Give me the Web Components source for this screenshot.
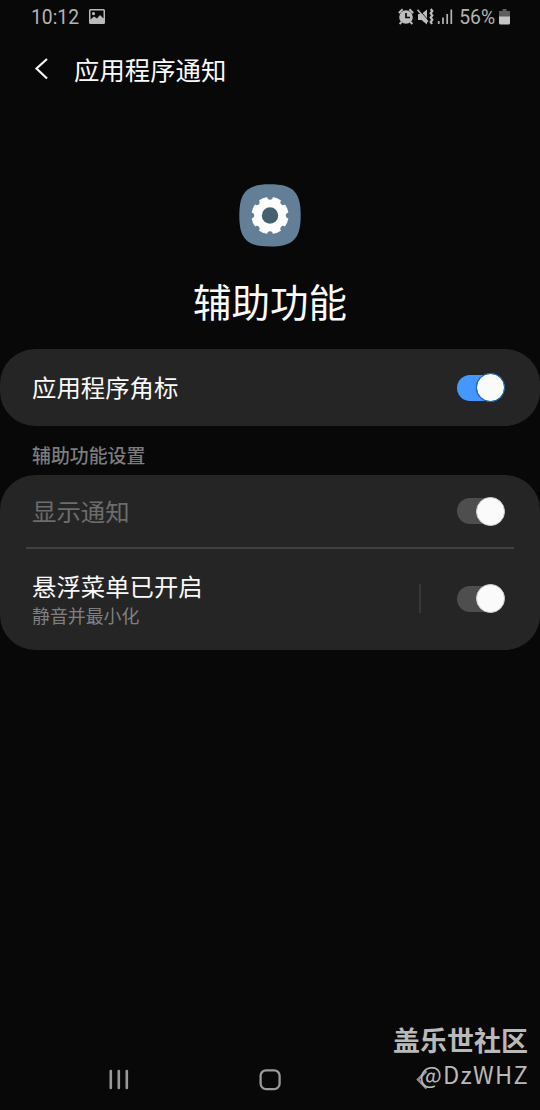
<!DOCTYPE html>
<html lang="zh-CN">
<head>
<meta charset="utf-8">
<title>应用程序通知</title>
<style>
html,body{margin:0;background:#080808}
body{font-family:Roboto,"Noto Sans CJK SC",sans-serif;color:#fafafa}
</style>
</head>
<body>
<notification-screen></notification-screen>
<script>
function define(name, html, setup) {
  const template = document.createElement('template');
  template.innerHTML = html;
  customElements.define(name, class extends HTMLElement {
    constructor() {
      super();
      this.attachShadow({mode: 'open'}).append(template.content.cloneNode(true));
      if (setup) setup(this);
    }
  });
}

define('status-bar', `
<style>
:host{display:flex;height:34px;padding:0 29px 0 31px;box-sizing:border-box;align-items:center;color:#b4b4b4;font-size:19.300px;line-height:32px}
span{padding-top:2px}
svg{display:block;flex:none}
.photo{margin-left:10px;margin-right:auto}
.pct{margin:0 4px 0 6px;font-size:19.300px}
</style>
<span>10:12</span>
<svg class="photo" width="16" height="16" viewBox="0 0 16 16"><path fill="#bababa" fill-rule="evenodd" d="M1.500 0h13Q16 0 16 1.500v12q0 1.500-1.500 1.500h-13Q0 15 0 13.500v-12Q0 0 1.500 0ZM1.500 1.500v9L5 7.600l3 2L11 6l3.500 3.500v-8ZM4.500 3a1.600 1.600 0 1 1 0 3.200a1.600 1.600 0 0 1 0-3.200Z"/></svg>
<svg width="55" height="18" viewBox="0 0 55 18">
 <circle cx="8" cy="9" r="6.800" fill="#bdbdbd"/>
 <path d="M.8 5 4.600 1.300M11.400 1.300 15.200 5M3.600 14 1.600 16M12.400 14l2 2" stroke="#bdbdbd" stroke-width="1.900"/>
 <path d="M8 5v4.500h4" fill="none" stroke="#080808" stroke-width="1.700"/>
 <path d="M20 6h3.500l5.500-4.500v15l-5.500-4.500H20Z" fill="#bdbdbd"/>
 <path d="M20.700 1.300 30.500 12.500" stroke="#080808" stroke-width="1"/>
 <path d="m19.500 1.800 10.500 12" stroke="#bdbdbd" stroke-width="1.500"/>
 <path d="m32.700 1 1.600 2-1.600 2.200 1.600 2.200-1.600 2.200 1.600 2.200-1.600 2.200 1.300 2" fill="none" stroke="#bdbdbd" stroke-width="2.200"/>
 <path d="M40.700 13v3M45 9.500V16M49.200 6v10M53.300 1.500V16" stroke="#b4b4b4" stroke-width="1.700"/>
</svg>
<span class="pct">56%</span>
<svg width="12" height="16" viewBox="0 0 12 16"><path d="M3.500 0h4v2H11v6H0V2h3.500Z" fill="#5d5d5d"/><path d="M0 7.500h11V14q0 1.500-1.500 1.500h-8Q0 15.500 0 14Z" fill="#c4c4c4"/></svg>`);

define('title-bar', `
<style>
:host{display:flex;height:70px;padding-left:34px;align-items:center}
svg{display:block;margin-right:25px}
h1{margin:0;padding-top:3px;font-size:25.400px;line-height:36px;font-weight:400}
</style>
<svg width="15" height="24" viewBox="0 0 15 24"><path d="M13 2 2.500 11.500 13 21.500" fill="none" stroke="#f5f5f5" stroke-width="2.200"/></svg>
<h1><slot></slot></h1>`);

define('app-hero', `
<style>
:host{display:flex;flex-direction:column;align-items:center;height:245px;padding-top:80px;box-sizing:border-box}
svg{display:block}
h2{margin:29px 0 0;font-size:38.500px;line-height:56px;font-weight:400}
</style>
<svg width="62" height="63" viewBox="0 0 62 63">
 <path d="M31 .3C54 .3 61.700 8 61.700 31.500S54 62.500 31 62.500.300 55 .300 31.500 8 .300 31 .300Z" fill="#627f97"/>
 <circle cx="31" cy="31.500" r="18.600" fill="#fff"/>
 <g class="notches" fill="#627f97"></g>
 <circle cx="31" cy="31.500" r="8.200" fill="#45616d"/>
</svg>
<h2><slot></slot></h2>`, host => {
  const group = host.shadowRoot.querySelector('.notches');
  for (let i = 0; i < 8; i++) {
    const notch = document.createElementNS('http://www.w3.org/2000/svg', 'path');
    notch.setAttribute('d', 'M27.900 12.300 28.600 14.400Q29.300 15.700 31 15.700T33.400 14.400L34.100 12.300Z');
    notch.setAttribute('transform', `rotate(${i * 45} 31 31.5)`);
    group.append(notch);
  }
});

define('settings-card', `
<style>:host{display:block;background:#252525;border-radius:35px;overflow:hidden}</style>
<slot></slot>`);

define('section-label', `
<style>:host{display:block;height:49px;padding:2px 32px 0;box-sizing:border-box;font-size:18.900px;line-height:58px;font-weight:500;color:#7c7c7c}</style>
<slot></slot>`);

define('toggle-switch', `
<style>
:host{display:grid;align-items:center;width:48px;height:30px;flex:none}
i{display:block;grid-area:1/1}
.track{width:46px;height:26px;border-radius:13px;background:#4e4e4e}
.thumb{width:27px;height:27px;border-radius:50%;justify-self:end;background:#fafafa;border:1px solid #cfcfcf}
:host([on]) .track{background:#4497ff}
:host([on]) .thumb{border-color:#10589c;box-shadow:0 0 1px #10589c}
</style>
<i class="track"></i><i class="thumb"></i>`);

define('setting-row', `
<style>
:host{display:flex;align-items:center;padding:0 35px 0 32px;box-sizing:border-box;font-size:24.400px;line-height:34px}
:host([disabled]){color:#6c6c6c}
.text{flex:1;padding-top:3px}
.sub{font-size:17.900px;line-height:26px;color:#808080}
.split{display:none;width:2px;height:29px;background:#383838;margin-right:36px}
:host([split]) .split{display:block}
:host([split]) .sub{margin-top:-1px}
</style>
<div class="text"><slot></slot><div class="sub"><slot name="sub"></slot></div></div>
<div class="split"></div><slot name="control"></slot>`);

define('row-divider', `<style>:host{display:block;height:2px;margin:0 26px;background:#414141}</style>`);

define('community-mark', `
<style>
:host{display:flex;flex-direction:column;align-items:flex-end;color:#b9b9b9}
b{font:700 27px/36px "Noto Sans CJK SC",sans-serif}
span{font:400 23.600px/32px "Noto Sans CJK SC",sans-serif;letter-spacing:1.300px;margin-right:-1px}
</style>
<b>盖乐世社区</b><span>@DzWHZ</span>`);

define('navigation-bar', `
<style>
:host{display:grid;grid-template-columns:repeat(3,1fr);width:453px;height:24px;margin-left:43px}
svg{display:block;justify-self:center}
</style>
<svg width="24" height="24" viewBox="0 0 24 24"><path d="M3.800 3v17M11.800 3v17M19.800 3v17" stroke="#9a9a9a" stroke-width="2.600" stroke-linecap="round"/></svg>
<svg width="24" height="24" viewBox="0 0 24 24"><rect x="2.600" y="2.300" width="19" height="18.800" rx="5.500" fill="none" stroke="#9a9a9a" stroke-width="2.300"/></svg>
<svg width="24" height="24" viewBox="0 0 24 24"><path d="M17.500 3 9 11.500 17.500 20.500" fill="none" stroke="#8d8d8d" stroke-width="2.500"/></svg>`);

define('notification-screen', `
<style>
:host{display:flex;flex-direction:column;position:relative;width:540px;height:1110px;background:#080808;overflow:hidden}
.badge{height:77px}.show{height:72px}.menu{height:101px;padding-bottom:2px}
navigation-bar{margin-top:auto;margin-bottom:18px}
community-mark{position:absolute;right:12px;top:1022px}
</style>
<status-bar></status-bar>
<title-bar>应用程序通知</title-bar>
<app-hero>辅助功能</app-hero>
<settings-card><setting-row class="badge">应用程序角标<toggle-switch slot="control" on></toggle-switch></setting-row></settings-card>
<section-label>辅助功能设置</section-label>
<settings-card>
<setting-row class="show" disabled>显示通知<toggle-switch slot="control"></toggle-switch></setting-row>
<row-divider></row-divider>
<setting-row class="menu" split>悬浮菜单已开启<span slot="sub">静音并最小化</span><toggle-switch slot="control"></toggle-switch></setting-row>
</settings-card>
<navigation-bar></navigation-bar>
<community-mark></community-mark>`);
</script>
</body>
</html>
